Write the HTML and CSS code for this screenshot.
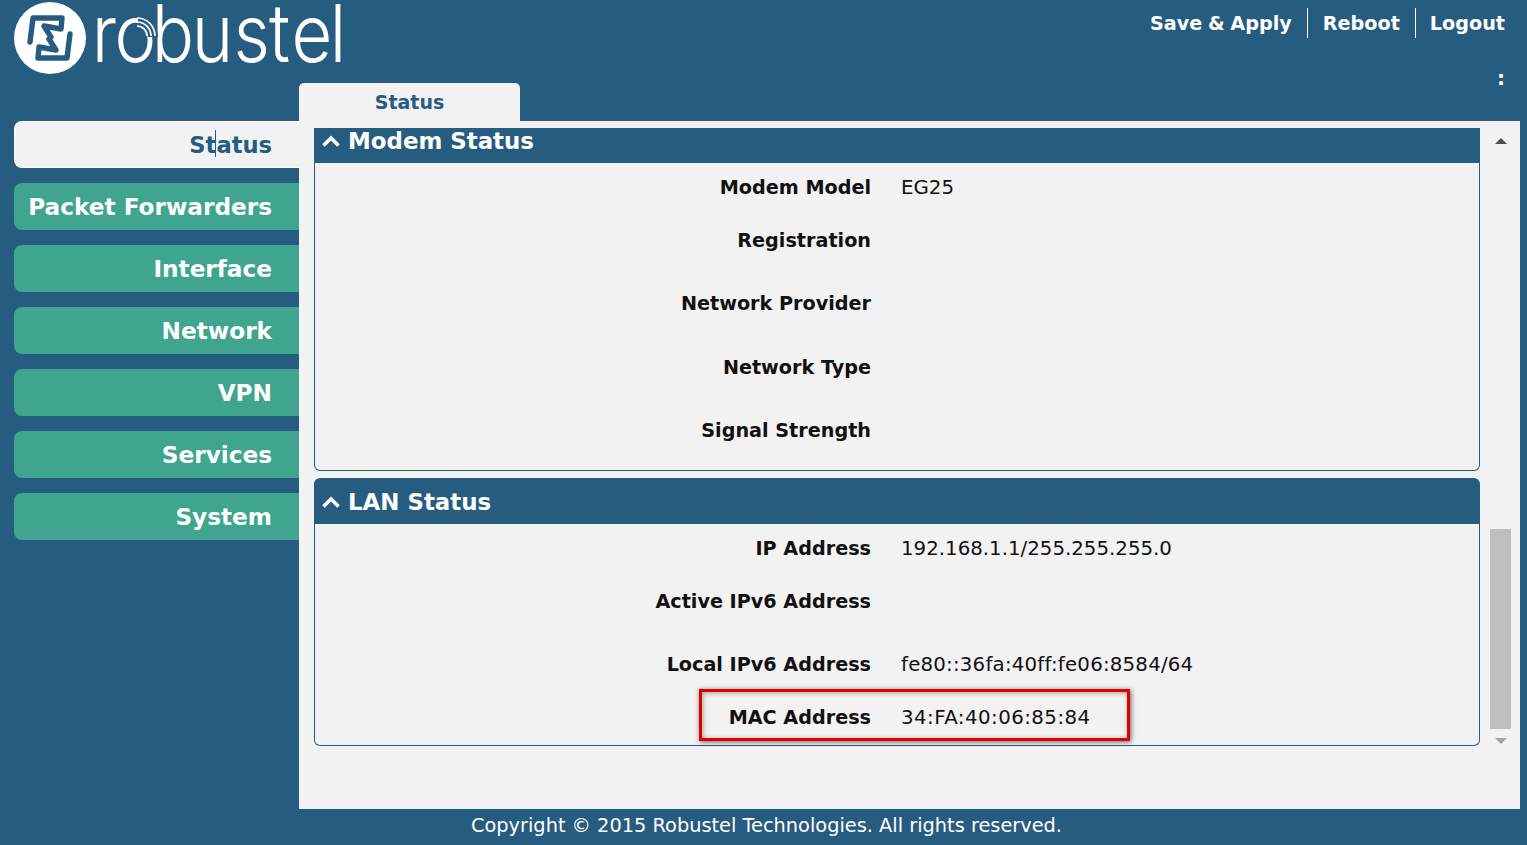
FILE: index.html
```html
<!DOCTYPE html>
<html lang="en">
<head>
<meta charset="utf-8">
<title>Robustel</title>
<link rel="stylesheet" href="styles.css">
</head>
<body>
<div class="page">
  <header class="header">
    <svg class="logo" width="350" height="83" viewBox="0 0 350 83">
      <circle cx="50" cy="38" r="36" fill="#fff"/>
      <g fill="none" stroke="#265c80" stroke-width="5.4" stroke-linejoin="round" stroke-linecap="round">
        <path d="M30 42 L33 18 L62 18 L61 29 L44 26 L51 37"/>
        <path d="M30 42 L33 18 L62 18 L61 29 L44 26 L51 37" transform="rotate(180 50 38)"/>
      </g>
      <text class="logo-word" transform="scale(.88 1)" x="104.3 130.1 172.5 218 265.3 305.8 331.3 374.8" y="62">robustel</text>
      <path d="M138 22 A15 15 0 0 1 153 37" fill="none" stroke="#265c80" stroke-width="10"/>
      <g fill="none" stroke="#fff" stroke-width="1.7">
        <path d="M137 18 A18 18 0 0 1 155 36"/>
        <path d="M137 22 A14 14 0 0 1 151 36"/>
        <path d="M137 26 A10 10 0 0 1 147 36"/>
      </g>
    </svg>
    <div class="header-right">
      <nav class="top-links">
        <a class="top-link">Save &amp; Apply</a>
        <a class="top-link">Reboot</a>
        <a class="top-link">Logout</a>
      </nav>
      <div class="colon">:</div>
    </div>
  </header>
  <div class="tabs"><div class="tab">Status</div></div>
  <div class="main">
    <aside class="sidebar">
      <div class="side-item active">Status<span class="caret"></span></div>
      <div class="side-item">Packet Forwarders</div>
      <div class="side-item">Interface</div>
      <div class="side-item">Network</div>
      <div class="side-item">VPN</div>
      <div class="side-item">Services</div>
      <div class="side-item">System</div>
    </aside>
    <section class="panel">
      <div class="content">
        <div class="card">
          <div class="card-head clipped">
            <svg class="chev" width="18" height="12" viewBox="0 0 18 12"><path d="M1.5 10.5 L9 3 L16.5 10.5" fill="none" stroke="#fff" stroke-width="3.6"/></svg>
            Modem Status
          </div>
          <div class="card-body modem-body">
            <div class="row"><div class="label">Modem Model</div><div class="value">EG25</div></div>
            <div class="row tall"><div class="label">Registration</div></div>
            <div class="row tall"><div class="label">Network Provider</div></div>
            <div class="row tall"><div class="label">Network Type</div></div>
            <div class="row tall"><div class="label">Signal Strength</div></div>
          </div>
        </div>
        <div class="card">
          <div class="card-head">
            <svg class="chev" width="18" height="12" viewBox="0 0 18 12"><path d="M1.5 10.5 L9 3 L16.5 10.5" fill="none" stroke="#fff" stroke-width="3.6"/></svg>
            LAN Status
          </div>
          <div class="card-body">
            <div class="row"><div class="label">IP Address</div><div class="value">192.168.1.1/255.255.255.0</div></div>
            <div class="row tall"><div class="label">Active IPv6 Address</div></div>
            <div class="row"><div class="label">Local IPv6 Address</div><div class="value hex">fe80::36fa:40ff:fe06:8584/64</div></div>
            <div class="row mac"><div class="label">MAC Address</div><div class="value mac-value">34:FA:40:06:85:84</div><div class="highlight"></div></div>
          </div>
        </div>
      </div>
      <div class="scrollbar">
        <div class="arrow up"></div>
        <div class="thumb"></div>
        <div class="arrow down"></div>
      </div>
    </section>
  </div>
  <footer class="footer">Copyright © 2015 Robustel Technologies. All rights reserved.</footer>
</div>
</body>
</html>
```

FILE: styles.css
```css
* { box-sizing: border-box; }
html, body { margin: 0; padding: 0; }
body {
  background: #265c80;
  font-family: "DejaVu Sans", Verdana, sans-serif;
  color: #111;
  overflow: hidden;
}
.page { width: 1527px; height: 845px; display: flex; flex-direction: column; }

.header { height: 83px; display: flex; justify-content: space-between; }
.logo { display: block; overflow: visible; }
.logo-word { font-family: "Inter", sans-serif; font-weight: 300; font-size: 80px; fill: #fff; }
.header-right { display: flex; flex-direction: column; align-items: flex-end; padding-right: 22px; }
.top-links { display: flex; margin-top: 8px; }
.top-link {
  height: 30px; line-height: 32px; padding: 0 15px;
  color: #fff; font-weight: bold; font-size: 19.2px;
  border-left: 1px solid #fff;
}
.top-link:first-child { border-left: 0; word-spacing: -1px; }
.top-link:last-child { padding: 0 0 0 14px; }
.colon { color: #fff; font-weight: bold; font-size: 20px; line-height: 24px; margin-top: 28px; }

.tabs { height: 38px; padding-left: 299px; display: flex; }
.tab {
  width: 221px; background: #f2f2f2; border-radius: 5px 5px 0 0;
  color: #265c80; font-weight: bold; font-size: 19px; line-height: 38px; text-align: center;
}

.main { height: 688px; display: flex; }
.sidebar { width: 299px; padding-left: 14px; display: flex; flex-direction: column; gap: 15px; }
.side-item {
  height: 47px; line-height: 47px; background: #3fa58e; color: #fff;
  font-weight: bold; font-size: 23.2px; text-align: right; padding-right: 27px;
  border-radius: 8px 0 0 8px; position: relative;
}
.side-item.active { background: #f2f2f2; color: #265c80; border: 1px solid #fff; border-right: 0; line-height: 47px; font-size: 22.6px; }
.caret { position: absolute; left: 200px; top: 8px; width: 1px; height: 27px; background: #265c80; }

.panel { width: 1221px; background: #f2f2f2; display: flex; }
.content { width: 1181px; padding: 7px 0 0 15px; display: flex; flex-direction: column; gap: 7px; }
.card-head {
  height: 46px; background: #265c80; color: #fff; font-weight: bold; font-size: 22.9px;
  display: flex; align-items: center; gap: 8px; padding: 2px 0 0 8px; border-radius: 6px 6px 0 0;
}
.card-head.clipped { height: 35px; border-radius: 0; padding: 0 0 9px 8px; }
.chev { flex: none; }
.card-body { border: 1px solid #265c80; border-top: 0; border-radius: 0 0 6px 6px; }
.modem-body { padding-bottom: 0.8px; }
.row { height: 53px; display: flex; font-size: 19.2px; line-height: 24px; padding-top: 13px; }
.row.tall { height: 63.3px; }
.label { width: 556px; text-align: right; font-weight: bold; line-height: 23px; }
.value { margin-left: 30px; font-size: 19.8px; }
.value.hex { letter-spacing: .2px; }
.value.mac-value { letter-spacing: .45px; }
.row.mac { height: 51.7px; position: relative; }
.highlight {
  position: absolute; left: 384px; top: -4px; width: 431px; height: 52px;
  border: 3px solid #e00000; box-shadow: 1px 1px 5px rgba(0,0,0,.6), inset 1px 1px 5px rgba(0,0,0,.35);
}

.scrollbar { width: 40px; display: flex; flex-direction: column; align-items: flex-start; padding: 17px 0 0 10px; }
.arrow { width: 0; height: 0; margin-left: 5px; border-left: 6px solid transparent; border-right: 6px solid transparent; }
.arrow.up { border-bottom: 6px solid #505050; }
.thumb { width: 21px; height: 200px; margin-top: 385px; background: #bfbfbf; }
.arrow.down { margin-top: 9px; border-top: 6px solid #a3a3a3; }

.footer { height: 36px; color: #fff; font-size: 19.35px; line-height: 33px; text-align: center; padding-left: 6px; }
```
